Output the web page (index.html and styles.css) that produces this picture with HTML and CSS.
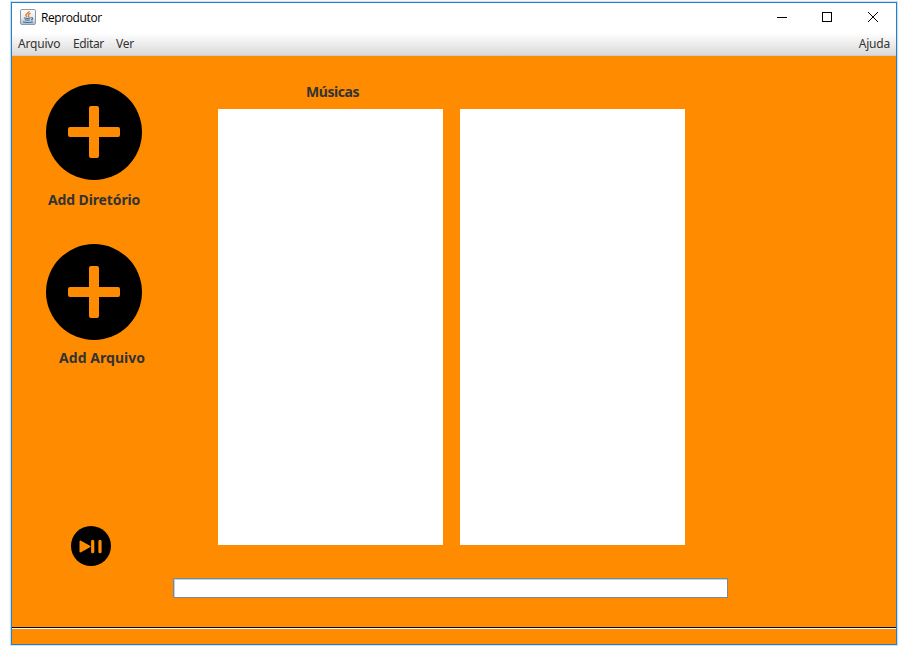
FILE: index.html
```html
<!DOCTYPE html>
<html lang="pt">
<head>
<meta charset="utf-8">
<title>Reprodutor</title>
<link rel="stylesheet" href="styles.css">
</head>
<body>
<div class="window">
  <header class="titlebar">
    <svg class="app-icon" width="16" height="16" viewBox="0 0 16 16">
      <defs><linearGradient id="tile" x1="0" y1="0" x2="0" y2="1"><stop offset="0" stop-color="#fff"/><stop offset=".55" stop-color="#e4ebf1"/><stop offset="1" stop-color="#aebccb"/></linearGradient></defs>
      <rect x=".5" y=".5" width="15" height="15" rx="1.5" fill="url(#tile)" stroke="#8b9bad"/>
      <path d="M9.200 2.200C9.500 4 5.300 4.700 5.800 6.300c.2.7.9 1.200 1.400 1.700M10.700 4.200C8.800 5 7.800 5.600 8.700 6.700c.4.500.1 1-.5 1.400" fill="none" stroke="#e87722" stroke-width="1.300"/>
      <path d="M4 8.800c1.500.7 5 .6 6.500 0M4.800 10.700c1.500.5 3.700.5 5.200 0M3 12.700c2 1 7.500 1 9.800 0M10.800 8.800c2.400-.5 2.400 1.500.2 2.200" fill="none" stroke="#3f6b93" stroke-width="1.100"/>
    </svg>
    <span class="title">Reprodutor</span>
    <svg class="controls" width="102" height="12" viewBox="0 0 102 12" fill="none" stroke="#000" shape-rendering="crispEdges">
      <path d="M0 6.500h10M45.500 1.500h9v9h-9z"/>
      <path d="M91 1l10 10M101 1L91 11" shape-rendering="auto"/>
    </svg>
  </header>
  <nav class="menubar">
    <span class="m-arquivo">Arquivo</span><span class="m-editar">Editar</span><span class="m-ver">Ver</span><span class="m-ajuda">Ajuda</span>
  </nav>
  <main class="content">
    <aside class="actions">
      <svg class="add" width="96" height="96" viewBox="0 0 96 96"><circle cx="48" cy="48" r="48"/><path d="M45 22h6q2 0 2 2v19h19q2 0 2 2v6q0 2-2 2H53v19q0 2-2 2h-6q-2 0-2-2V53H24q-2 0-2-2v-6q0-2 2-2h19V24q0-2 2-2z" fill="#ff8c00"/></svg>
      <div class="label dir">Add Diretório</div>
      <svg class="add second" width="96" height="96" viewBox="0 0 96 96"><circle cx="48" cy="48" r="48"/><path d="M45 22h6q2 0 2 2v19h19q2 0 2 2v6q0 2-2 2H53v19q0 2-2 2h-6q-2 0-2-2V53H24q-2 0-2-2v-6q0-2 2-2h19V24q0-2 2-2z" fill="#ff8c00"/></svg>
      <div class="label file">Add Arquivo</div>
      <svg class="play" width="40" height="40" viewBox="0 0 40 40"><circle cx="20" cy="20" r="20"/><path d="M9.500 15.500v10l9-5z" fill="#ff8c00" stroke="#ff8c00" stroke-width="2" stroke-linejoin="round"/><path d="M21.700 15.300v10.400M29 15.300v10.400" stroke="#ff8c00" stroke-width="3.200" stroke-linecap="round"/></svg>
    </aside>
    <section class="library">
      <div class="label heading">Músicas</div>
      <div class="lists"><div class="list"></div><div class="list"></div></div>
      <div class="field"></div>
    </section>
  </main>
  <footer class="status"></footer>
</div>
</body>
</html>
```

FILE: styles.css
```css
* { box-sizing: border-box; }
body { margin: 0; height: 646px; overflow: hidden; background: #fff; padding: 2px 0 0 11px; font-family: "Noto Sans", "Open Sans", sans-serif; }
svg { display: block; flex: none; }
.window { width: 886px; height: 643px; border: 1px solid #1883d7; background: #ff8c00; display: flex; flex-direction: column; box-shadow: 0 0 1px 1px #d8dce0; }
.titlebar { height: 30px; flex: none; background: #fff; display: flex; align-items: center; padding: 0 17px 2px 8px; }
.title { font: 12px/16px "Open Sans", sans-serif; letter-spacing: -0.4px; margin: 2px 0 0 5px; color: #000; white-space: nowrap; }
.controls { margin-left: auto; }
.menubar { height: 23px; flex: none; display: flex; font-size: 12px; line-height: 22px; letter-spacing: -0.2px; color: #333; padding: 0 6px; background: linear-gradient(#fff, #dadada); border-bottom: 1px solid #cdcdcd; }
.menubar span { white-space: nowrap; }
.m-arquivo { width: 55px; }
.m-editar { width: 43px; letter-spacing: -0.4px; }
.menubar .m-ajuda { margin-left: auto; }
.content { flex: 1; display: flex; }
.actions { width: 161px; padding: 28px 0 0 34px; }
.label { font-size: 14px; line-height: 20px; font-weight: 700; color: #333; white-space: nowrap; }
.dir { margin: 10px 0 0 2px; letter-spacing: -0.12px; }
.second { margin-top: 34px; }
.file { margin: 8px 0 0 13px; letter-spacing: 0.05px; }
.play { margin: 158px 0 0 25px; }
.library { padding-top: 26px; }
.heading { margin-left: 133px; letter-spacing: -0.45px; }
.lists { display: flex; gap: 17px; margin: 7px 0 0 45px; }
.list { width: 225px; height: 436px; background: #fff; }
.field { width: 555px; height: 20px; margin-top: 33px; background: #fff; border: 1px solid #7a8a99; box-shadow: inset 1px 1px #b8cfe5; }
.status { height: 17px; flex: none; border-top: 1px solid #000; box-shadow: inset 0 1px #fff; }
```
